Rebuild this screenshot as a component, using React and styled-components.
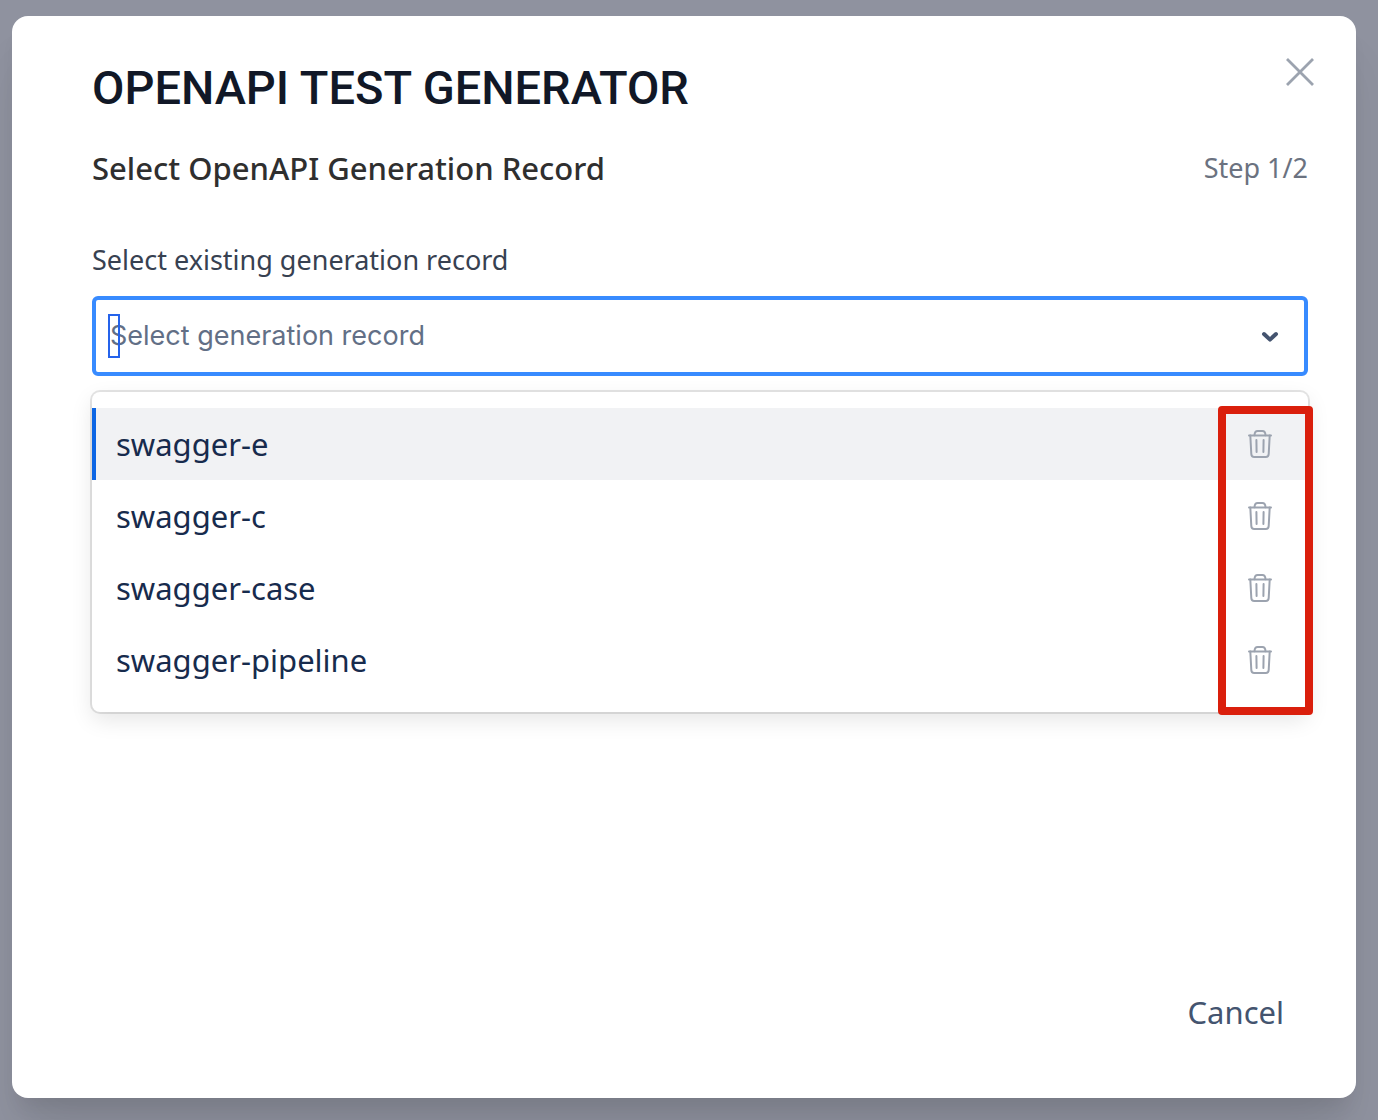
import { useState } from "react";
import styled, { createGlobalStyle } from "styled-components";

const records = ["swagger-e", "swagger-c", "swagger-case", "swagger-pipeline"];

export default function App() {
    const [items, setItems] = useState(records);
    const [active, setActive] = useState(records[0]);
    const [search, setSearch] = useState("");

    function removeRecord(name) {
        setItems(items.filter(item => item !== name));
    }

    return (
        <>
            <GlobalStyle />
            <Backdrop>
                <Modal role="dialog" aria-modal="true" aria-labelledby="modal-title">
                    <Header>
                        <Title id="modal-title">OPENAPI TEST GENERATOR</Title>
                        <CloseButton type="button" aria-label="Close">
                            <CloseIcon />
                        </CloseButton>
                    </Header>

                    <StepRow>
                        <Subtitle>Select OpenAPI Generation Record</Subtitle>
                        <Step>Step 1/2</Step>
                    </StepRow>

                    <Label htmlFor="record">Select existing generation record</Label>
                    <Select>
                        <Control>
                            <Value>
                                {!search && <Placeholder id="record-hint">Select generation record</Placeholder>}
                                <SearchInput
                                    id="record"
                                    type="text"
                                    role="combobox"
                                    aria-expanded="true"
                                    aria-controls="record-list"
                                    aria-describedby="record-hint"
                                    autoComplete="off"
                                    value={search}
                                    onChange={e => setSearch(e.target.value)}
                                />
                            </Value>
                            <ChevronIcon />
                        </Control>

                        <Menu id="record-list">
                            {items.map(item => (
                                <Option key={item} $active={item === active} onMouseEnter={() => setActive(item)}>
                                    <OptionName>{item}</OptionName>
                                    <DeleteButton
                                        type="button"
                                        aria-label={`Delete ${item}`}
                                        onClick={() => removeRecord(item)}
                                    >
                                        <TrashIcon />
                                    </DeleteButton>
                                </Option>
                            ))}
                            <Highlight />
                        </Menu>
                    </Select>

                    <Footer>
                        <CancelButton type="button">Cancel</CancelButton>
                    </Footer>
                </Modal>
            </Backdrop>
        </>
    )
}

function CloseIcon() {
    return (
        <svg width="48" height="48" viewBox="0 0 48 48" fill="none" stroke="currentColor" strokeWidth="2.8">
            <path d="M11 11l26 26M37 11L11 37" />
        </svg>
    )
}

function ChevronIcon() {
    return (
        <svg width="20" height="20" viewBox="0 0 20 20" fill="none" stroke="#44546f" strokeWidth="4" strokeLinecap="round" strokeLinejoin="round" aria-hidden="true">
            <path d="M4 8l6 5.6L16 8" />
        </svg>
    )
}

function TrashIcon() {
    return (
        <svg width="24" height="28" viewBox="0 0 24 28" fill="none" stroke="currentColor" strokeWidth="2" strokeLinecap="round" strokeLinejoin="round">
            <path d="M1 5.5h22" />
            <path d="M6.5 5.2C6.6 2.400 7.600 1 9.700 1h4.600c2.100 0 3.100 1.400 3.200 4.200" />
            <path d="M2.300 5.500l1 18.500c.1 2 1.100 3 2.900 3h11.600c1.800 0 2.800-1 2.900-3l1-18.500" />
            <path d="M8.400 10l.2 12M15.600 10l-.2 12" />
        </svg>
    )
}

const GlobalStyle = createGlobalStyle`
    * {
        box-sizing: border-box;
    }

    body {
        margin: 0;
        font-family: "Noto Sans", "Open Sans", sans-serif;
    }

    h1, h2, p, ul {
        margin: 0;
        padding: 0;
    }

    button {
        padding: 0;
        border: none;
        background: none;
        font-family: inherit;
        cursor: pointer;
    }

    svg {
        display: block;
        flex-shrink: 0;
    }
`

const Backdrop = styled.div`
    min-height: 100vh;
    padding: 16px 22px 22px 12px;
    display: flex;

    background-color: #8f929f;
`

const Modal = styled.section`
    flex: 1;
    min-width: 0;
    padding: 32px 48px 50px 80px;

    display: flex;
    flex-direction: column;

    background-color: #fff;
    border-radius: 16px;
    box-shadow: 0 40px 50px -10px rgba(0, 0, 0, 0.1), 0 16px 20px -8px rgba(0, 0, 0, 0.08);
`

const Header = styled.header`
    margin-right: -16px;

    display: flex;
    justify-content: space-between;
    align-items: flex-start;
`

const Title = styled.h1`
    padding-top: 8px;

    font-family: Roboto, sans-serif;
    font-size: 47px;
    font-weight: 500;
    line-height: 64px;
    color: #111827;
`

const CloseButton = styled.button`
    color: #9ca3af;
`

const StepRow = styled.div`
    margin-top: 28px;

    display: flex;
    justify-content: space-between;
    align-items: center;
`

const Subtitle = styled.h2`
    font-size: 31px;
    font-weight: 500;
    line-height: 40px;
    color: #2f2f2f;
`

const Step = styled.p`
    font-size: 27px;
    line-height: 40px;
    color: #6b7280;
`

const Label = styled.label`
    margin: 52px 0 16px;

    font-size: 27px;
    line-height: 40px;
    color: #374151;
`

const Select = styled.div`
    position: relative;
`

const Control = styled.div`
    min-height: 80px;
    padding: 0 24px 0 12px;
    border: 4px solid #388bff;
    border-radius: 6px;

    display: flex;
    justify-content: space-between;
    align-items: center;
`

const Value = styled.div`
    flex: 1;

    display: grid;
    align-items: center;

    font-family: Inter, sans-serif;
    font-size: 27px;
    line-height: 40px;
`

const Placeholder = styled.span`
    grid-area: 1 / 1;
    padding-left: 2px;

    color: #626f86;
`

/* stays as narrow as the caret until something is typed */
const SearchInput = styled.input`
    grid-area: 1 / 1;
    width: ${(props) => props.value ? "100%" : "12px"};
    height: 44px;
    padding: 0;
    border: 2px solid #2563eb;
    outline: none;

    background: transparent;
    font: inherit;
    color: #172b4d;
`

const Menu = styled.ul`
    width: 100%;
    padding: 16px 0;

    position: absolute;
    top: calc(100% + 16px);
    left: 0;

    list-style: none;
    background-color: #fff;
    border-radius: 8px;
    box-shadow: 0 0 0 2px rgba(0, 0, 0, 0.1), 0 8px 22px rgba(0, 0, 0, 0.1);
`

const Option = styled.li`
    height: 72px;
    padding: 0 36px 0 20px;
    border-left: 4px solid ${(props) => props.$active ? "#0c66e4" : "transparent"};

    display: flex;
    justify-content: space-between;
    align-items: center;

    background-color: ${(props) => props.$active ? "#f1f2f4" : "#fff"};
`

const OptionName = styled.span`
    font-size: 31px;
    line-height: 40px;
    color: #172b4d;
`

const DeleteButton = styled.button`
    color: #9ca3af;
`

/* red frame around the delete column */
const Highlight = styled.li`
    width: 95px;
    border: 8px solid #da1f0c;
    border-radius: 4px;

    position: absolute;
    top: 14px;
    right: -5px;
    bottom: -3px;

    pointer-events: none;
`

const Footer = styled.footer`
    margin-top: auto;
    padding-top: 240px;

    display: flex;
    justify-content: flex-end;
`

const CancelButton = styled.button`
    padding: 0 24px;

    font-size: 31px;
    line-height: 72px;
    color: #44546f;
`
